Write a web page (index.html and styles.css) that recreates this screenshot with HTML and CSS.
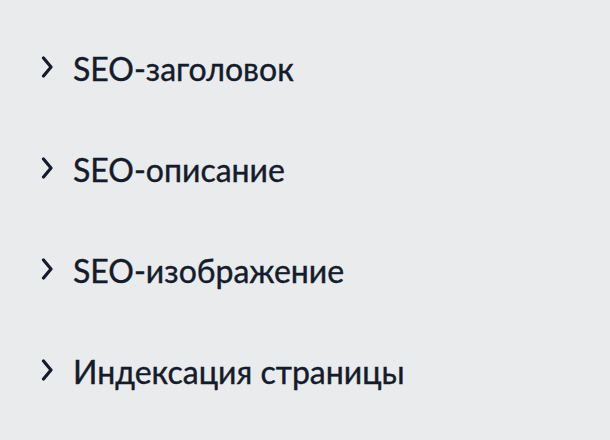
FILE: index.html
```html
<!DOCTYPE html>
<html lang="ru">
<head>
  <meta charset="UTF-8" />
  <meta name="viewport" content="width=device-width, initial-scale=1.0"/>
  <title>SEO</title>
  <link rel="stylesheet" href="styles.css">
</head>
<body>
  <div class="sections">
    <div class="section">
      <svg class="chevron" viewBox="0 0 12 24"><path d="M2.5 3l7.5 9-7.5 9"/></svg>
      <span>SEO-заголовок</span>
    </div>
    <div class="section">
      <svg class="chevron" viewBox="0 0 12 24"><path d="M2.5 3l7.5 9-7.5 9"/></svg>
      <span>SEO-описание</span>
    </div>
    <div class="section">
      <svg class="chevron" viewBox="0 0 12 24"><path d="M2.5 3l7.5 9-7.5 9"/></svg>
      <span>SEO-изображение</span>
    </div>
    <div class="section">
      <svg class="chevron" viewBox="0 0 12 24"><path d="M2.5 3l7.5 9-7.5 9"/></svg>
      <span>Индексация страницы</span>
    </div>
  </div>
</body>
</html>
```

FILE: styles.css
```css
body {
  margin: 0;
  background-color: #eaebed;
  font-family: Lato, "Noto Sans", sans-serif;
  color: #141c2b;
}
.sections {
  padding: 46px 0 0 41px;
}
.section {
  display: flex;
  align-items: center;
  gap: 20px;
  height: 44px;
  margin-bottom: 57px;
  font-size: 32px;
  -webkit-text-stroke: 0.4px #141c2b;
}
.chevron {
  flex-shrink: 0;
  width: 12px;
  height: 24px;
  margin-top: -3px;
  fill: none;
  stroke: #141c2b;
  stroke-width: 3.2;
  stroke-linecap: round;
  stroke-linejoin: round;
}
```
